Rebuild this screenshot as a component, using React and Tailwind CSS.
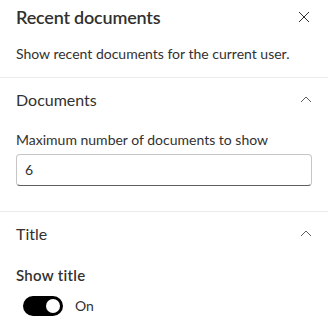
function CloseIcon() {
  return (
    <svg width="12" height="12" viewBox="0 0 12 12" className="text-[#323130]">
      <path d="M1 1L11 11M11 1L1 11" stroke="currentColor" strokeWidth="1" fill="none" />
    </svg>
  );
}

function ChevronUp() {
  return (
    <svg width="12" height="7" viewBox="0 0 12 7" className="text-[#605e5c]">
      <path d="M1 6L6 1L11 6" stroke="currentColor" strokeWidth="1" fill="none" />
    </svg>
  );
}

function GroupHeader({ children }) {
  return (
    <div className="flex items-center justify-between h-[46px] pl-4 pr-4 pb-[3px]">
      <span className="text-base text-[#323130]">{children}</span>
      <ChevronUp />
    </div>
  );
}

export default function App() {
  return (
    <div className="w-[328px] h-[335px] bg-white overflow-hidden font-['Lato',sans-serif] text-[#323130]">
      <div className="flex items-start justify-between pl-4 pr-4 pt-[2px]">
        <h1 className="text-[18px] leading-7 font-semibold tracking-[-0.2px] pt-[1px]">Recent documents</h1>
        <div className="pt-[9px] pr-[2px]">
          <CloseIcon />
        </div>
      </div>
      <p className="px-4 mt-[13px] text-sm leading-5 pb-[13px]">Show recent documents for the current user.</p>
      <div className="border-t border-[#edebe9]" />

      <GroupHeader>Documents</GroupHeader>
      <div className="px-4 pt-[6px] pb-[25px]">
        <label className="block text-sm leading-5 mb-[4px]">Maximum number of documents to show</label>
        <div className="h-8 rounded border border-[#c8c6c4] border-b-[#605e5c] flex items-center px-2 text-sm">6</div>
      </div>
      <div className="border-t border-[#edebe9]" />

      <GroupHeader>Title</GroupHeader>
      <div className="px-4 pt-[7px]">
        <div className="text-[15px] leading-5 font-semibold tracking-[0.3px]">Show title</div>
        <div className="flex items-center gap-3 mt-[11px] pl-[7px]">
          <div className="w-10 h-5 rounded-full bg-black flex items-center justify-end pr-[3px]">
            <div className="w-[14px] h-[14px] rounded-full bg-white" />
          </div>
          <span className="text-sm">On</span>
        </div>
      </div>
    </div>
  );
}
